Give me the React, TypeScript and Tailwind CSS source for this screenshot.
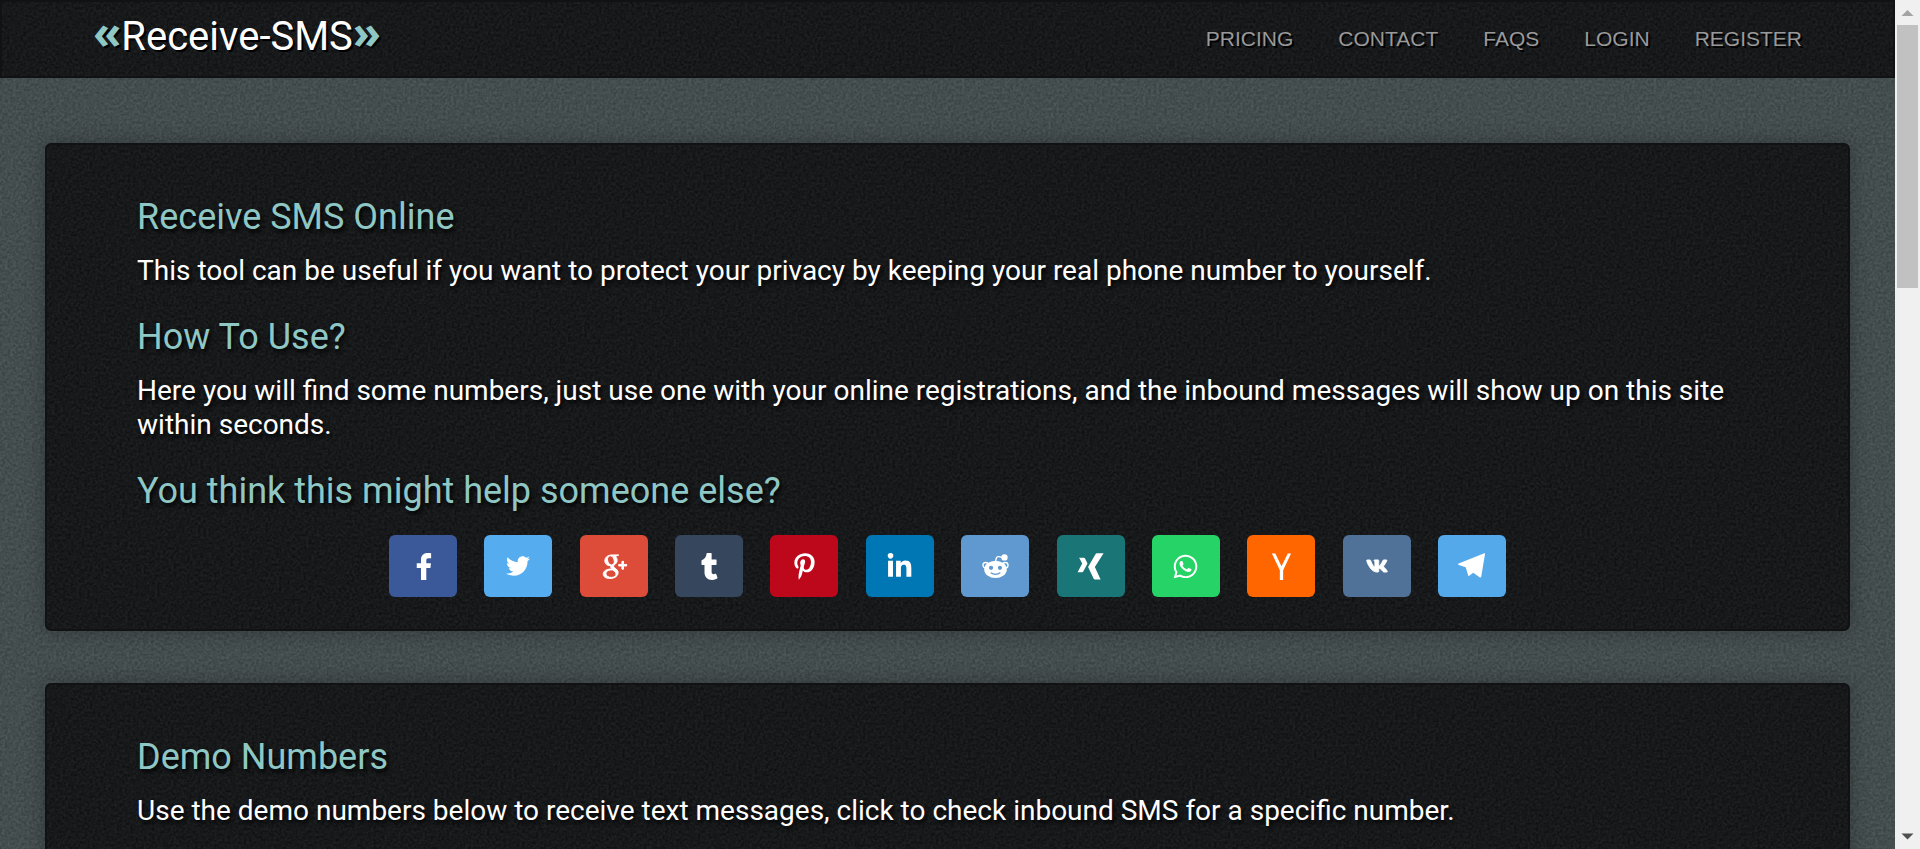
import React from "react";
import { FaTwitter, FaTumblr, FaPinterestP, FaLinkedinIn, FaWhatsapp, FaVk } from "react-icons/fa";
import { TiSocialGooglePlus } from "react-icons/ti";

type IconProps = { className?: string };

function Noise({ id, className }: { id: string; className: string }) {
  return (
    <svg aria-hidden="true" className={`pointer-events-none absolute inset-0 h-full w-full ${className}`}>
      <filter id={id} x="0" y="0" width="100%" height="100%" colorInterpolationFilters="sRGB">
        <feTurbulence type="fractalNoise" baseFrequency="0.37" numOctaves="2" />
        <feColorMatrix values="1.5 1.5 0 0 -1  1.5 1.5 0 0 -1  1.5 1.5 0 0 -1  0 0 0 0 1" />
      </filter>
      <rect width="100%" height="100%" filter={`url(#${id})`} />
    </svg>
  );
}

function Glyph({ className, children }: IconProps & { children: React.ReactNode }) {
  return (
    <svg viewBox="0 0 28 28" className={className} fill="currentColor" aria-hidden="true">
      {children}
    </svg>
  );
}

function FacebookIcon({ className }: IconProps) {
  return (
    <Glyph className={className}>
      <path d="M16.900 28V15.600h4.300l.5-5h-4.800V7.700c0-1.400.5-2.300 2.300-2.300h2.700V.3C21.200.1 20 0 18.400 0c-4.300 0-7 2.500-7 6.900v3.700H7v5h4.400V28z" />
    </Glyph>
  );
}

function RedditIcon({ className }: IconProps) {
  return (
    <Glyph className={className}>
      <g fill="none" stroke="currentColor" strokeWidth="1.400">
        <circle cx="3.900" cy="12.800" r="2.900" />
        <circle cx="24.100" cy="12.800" r="2.900" />
        <path d="M14 8.500 15 5c.4-1.200 1.200-1.400 2.400-1.200l4 .7" />
      </g>
      <circle cx="23.300" cy="4.600" r="3.300" />
      <ellipse cx="14" cy="17" rx="11.700" ry="8.900" />
      <g className="text-[#5f99cf]">
        <circle cx="9.400" cy="15.300" r="2.200" fill="currentColor" />
        <circle cx="18.600" cy="15.300" r="2.200" fill="currentColor" />
        <path d="M9 20.500c3 2 7 2 10 0" fill="none" stroke="currentColor" strokeWidth="1.300" />
      </g>
    </Glyph>
  );
}

function XingIcon({ className }: IconProps) {
  return (
    <Glyph className={className}>
      <path d="M2.200 4.800h4.900c.5 0 .9.300 1.100.7l2.700 5.500-4.400 8.200c-.3.500-.7.700-1.200.700H.6l4.800-8.900z" />
      <path d="M20.600.3h7L18.500 14.600l6 12.900h-5.900c-.6 0-1-.3-1.300-.8L11.500 14.600 19.300 1c.3-.5.700-.7 1.300-.7z" />
    </Glyph>
  );
}

function YIcon({ className }: IconProps) {
  return (
    <Glyph className={className}>
      <path d="M4 .5h3.600L14 13.700 20.500.5h3.400L15.700 18v10h-3.400V18z" />
    </Glyph>
  );
}

function TelegramIcon({ className }: IconProps) {
  return (
    <Glyph className={className}>
      <path d="M27.300.3.700 11c-.8.400-.7 1.200.1 1.400L8 14.800l2.500 8.400c.2.700.8.700 1.200.3L15.800 20.500l6.600 4.600c.8.500 1.500.2 1.700-.6L28 1.100c.1-.7-.1-1-.7-.8z" />
    </Glyph>
  );
}

function GooglePlusIcon({ className }: IconProps) {
  return <TiSocialGooglePlus className={className} stroke="currentColor" strokeWidth={0.6} />;
}

function VkIcon({ className }: IconProps) {
  return <FaVk className={className} stroke="currentColor" strokeWidth={22} />;
}

const shares: { name: string; bg: string; size: string; Icon: React.ComponentType<IconProps> }[] = [
  { name: "Facebook", bg: "bg-[#3b5998]", size: "size-[27px]", Icon: FacebookIcon },
  { name: "Twitter", bg: "bg-[#55acee]", size: "size-6", Icon: FaTwitter },
  { name: "Google+", bg: "bg-[#dd4b39]", size: "size-[38px]", Icon: GooglePlusIcon },
  { name: "Tumblr", bg: "bg-[#36465d]", size: "size-[27px]", Icon: FaTumblr },
  { name: "Pinterest", bg: "bg-[#bd081c]", size: "size-[27px]", Icon: FaPinterestP },
  { name: "LinkedIn", bg: "bg-[#0077b5]", size: "size-[27px]", Icon: FaLinkedinIn },
  { name: "Reddit", bg: "bg-[#5f99cf]", size: "size-[27px]", Icon: RedditIcon },
  { name: "Xing", bg: "bg-[#1a7576]", size: "size-[27px]", Icon: XingIcon },
  { name: "WhatsApp", bg: "bg-[#25d366]", size: "size-[27px]", Icon: FaWhatsapp },
  { name: "Hacker News", bg: "bg-[#ff6600]", size: "size-[27px]", Icon: YIcon },
  { name: "VK", bg: "bg-[#507299]", size: "size-[22px]", Icon: VkIcon },
  { name: "Telegram", bg: "bg-[#54a9eb]", size: "size-[27px]", Icon: TelegramIcon },
];

const navItems = ["PRICING", "CONTACT", "FAQS", "LOGIN", "REGISTER"];

function Panel({ id, children }: { id: string; children: React.ReactNode }) {
  return (
    <section className="relative overflow-hidden rounded-md border-2 border-[#101213] bg-[#111315] shadow-[0_0_20px_rgba(0,0,0,0.3)]">
      <Noise id={id} className="opacity-5" />
      <div className="relative px-[5%] pt-[47px] pb-8">{children}</div>
    </section>
  );
}

function Title({ children }: { children: React.ReactNode }) {
  return <h2 className="text-[36px] leading-[50px] text-[#8fc7c4] [text-shadow:2px_3px_4px_#000]">{children}</h2>;
}

function Block({ title, children }: { title: string; children: React.ReactNode }) {
  return (
    <div className="mb-6">
      <Title>{title}</Title>
      <p className="mt-3 text-[28px] leading-[34px] text-white [text-shadow:2px_3px_4px_#000]">{children}</p>
    </div>
  );
}

function Guillemet({ children }: { children: React.ReactNode }) {
  return <span className="pb-4 font-['Open_Sans',sans-serif] text-[46px] leading-[44px] font-bold text-[#8fc7c4]">{children}</span>;
}

export default function App() {
  return (
    <div className="flex h-screen overflow-hidden font-[Roboto,sans-serif]">
      <div className="relative min-w-0 flex-1 overflow-hidden bg-[#404a4b]">
        <Noise id="page-noise" className="opacity-[0.07]" />
        <header className="relative border-2 border-[#101213] bg-[#111315]">
          <Noise id="header-noise" className="opacity-5" />
          <div className="relative flex h-[74px] items-center justify-between px-[91px]">
            <a href="#" className="flex items-center text-[40px] leading-[48px] text-white [text-shadow:2px_2px_0_#000]">
              <Guillemet>«</Guillemet>
              <span className="pb-1">Receive-SMS</span>
              <Guillemet>»</Guillemet>
            </a>
            <nav className="flex gap-[45px] font-['Liberation_Sans',sans-serif] text-[21px] text-[#999]">
              {navItems.map((item) => (
                <a key={item} href="#" className="[text-shadow:2px_2px_0_#000]">
                  {item}
                </a>
              ))}
            </nav>
          </div>
        </header>
        <main className="relative flex flex-col gap-[52px] px-[45px] pt-[65px]">
          <Panel id="intro-noise">
            <Block title="Receive SMS Online">
              This tool can be useful if you want to protect your privacy by keeping your real phone number to yourself.
            </Block>
            <Block title="How To Use?">
              Here you will find some numbers, just use one with your online registrations, and the inbound messages will show up on this site
              within seconds.
            </Block>
            <Title>You think this might help someone else?</Title>
            <div className="mx-auto mt-[19px] flex max-w-[1117px] justify-between">
              {shares.map(({ name, bg, size, Icon }) => (
                <a key={name} href="#" aria-label={name} className={`flex h-[62px] w-[68px] items-center justify-center rounded-md text-white ${bg}`}>
                  <Icon className={size} />
                </a>
              ))}
            </div>
          </Panel>
          <Panel id="demo-noise">
            <Block title="Demo Numbers">
              Use the demo numbers below to receive text messages, click to check inbound SMS for a specific number.
            </Block>
            <div className="h-40" />
          </Panel>
        </main>
      </div>
      <div aria-hidden="true" className="flex w-[25px] shrink-0 flex-col items-center bg-[#f0f0f0]">
        <svg viewBox="0 0 25 25" className="size-[25px]" fill="#a3a3a3">
          <path d="M12.500 10 18.500 16h-12z" />
        </svg>
        <div className="h-[263px] w-[21px] bg-[#c1c1c1]" />
        <svg viewBox="0 0 25 25" className="mt-auto size-[25px]" fill="#505050">
          <path d="M12.500 15.500 18.500 9.500h-12z" />
        </svg>
      </div>
    </div>
  );
}
